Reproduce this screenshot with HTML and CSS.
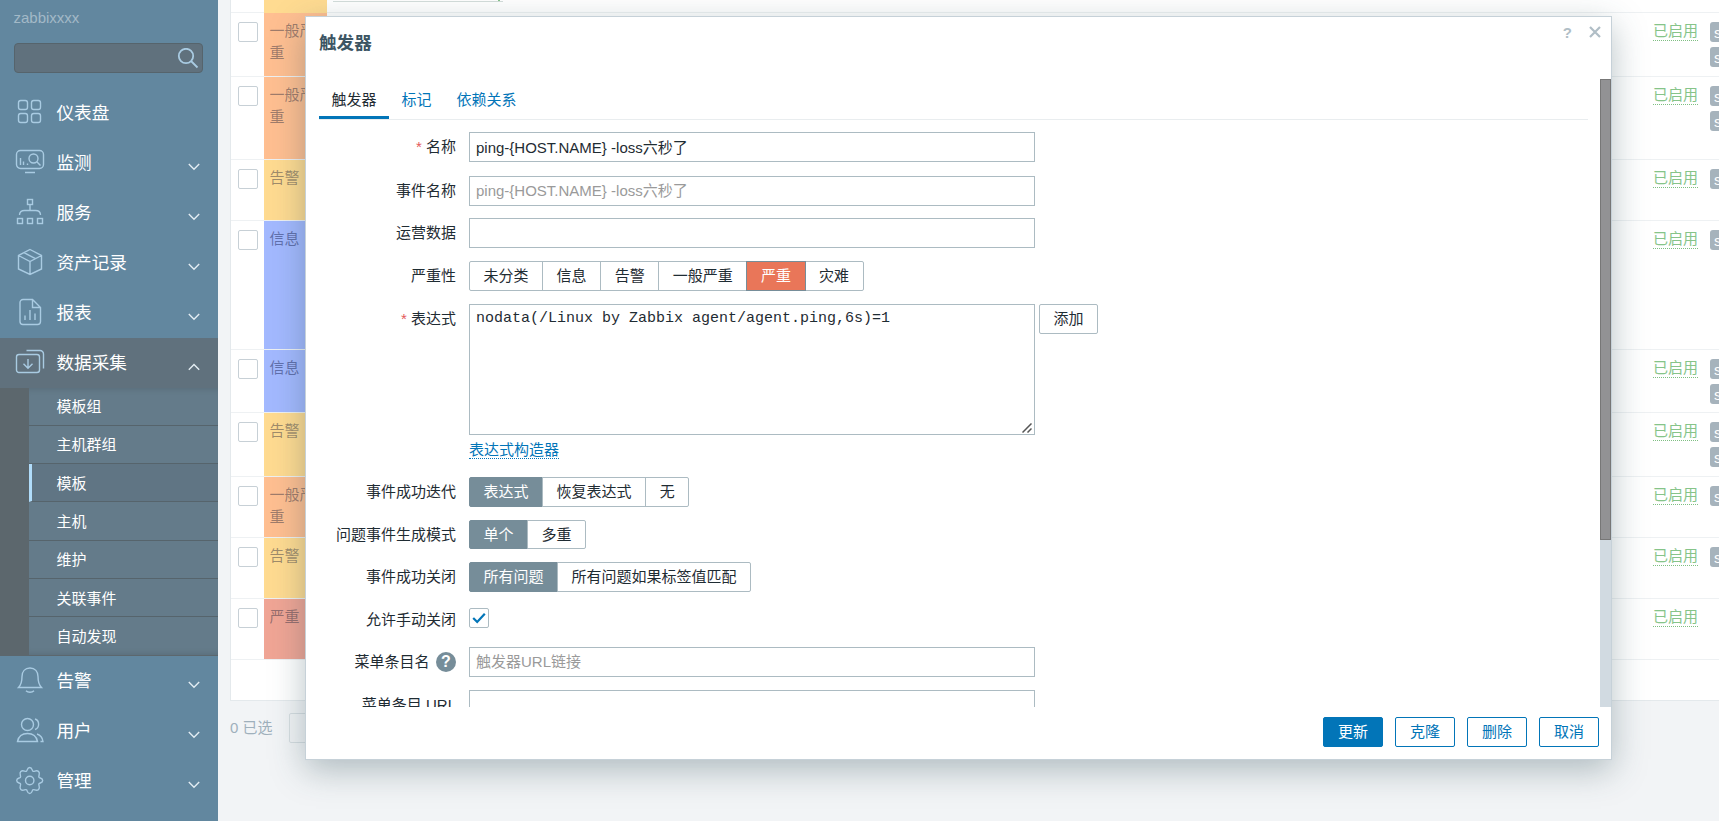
FILE: index.html
```
<!DOCTYPE html>
<html lang="zh-CN">
<head>
    <meta charset="UTF-8">
    <meta name="viewport" content="width=device-width, initial-scale=1.0">
    <title>触发器</title>
    <link rel="stylesheet" href="styles.css">
</head>
<body>
    <aside class="sidebar">
        <div class="server-name">zabbixxxx</div>
        <div class="search">
            <svg width="22" height="22" viewBox="0 0 22 22"><circle cx="9" cy="8" r="7.2"/><path d="M14 13l6.500 6.500"/></svg>
        </div>

        <nav class="menu">
            <a class="menu-item">
                <svg class="icon" viewBox="0 0 30 30"><rect x="3.5" y="3.5" width="9" height="9" rx="2.2"/><rect x="16.5" y="3.5" width="9" height="9" rx="2.2"/><rect x="3.5" y="16.5" width="9" height="9" rx="2.2"/><rect x="16.5" y="16.5" width="9" height="9" rx="2.2"/></svg>
                <span>仪表盘</span>
            </a>
            <a class="menu-item">
                <svg class="icon" viewBox="0 0 30 30"><rect x="1.5" y="3.5" width="27" height="18" rx="4"/><path d="M5.5 11v7M8.500 14.500v3.500M12.500 16.500v1.500M10 25.500h10"/><circle cx="18.500" cy="11.500" r="4.500"/><path d="M21.800 14.800l3.700 3.700"/></svg>
                <span>监测</span>
                <svg class="arrow" viewBox="0 0 12 8"><path d="M.8 1l5.200 5.200L11.200 1"/></svg>
            </a>
            <a class="menu-item">
                <svg class="icon" viewBox="0 0 30 30"><rect x="12.500" y="2.500" width="5" height="5"/><path d="M15 7.500v6M4.500 18c0-3 2-4.500 5-4.500h11c3 0 5 1.500 5 4.500"/><rect x="2.500" y="21.500" width="5" height="5"/><rect x="12.500" y="21.500" width="5" height="5"/><rect x="22.500" y="21.500" width="5" height="5"/></svg>
                <span>服务</span>
                <svg class="arrow" viewBox="0 0 12 8"><path d="M.8 1l5.200 5.200L11.200 1"/></svg>
            </a>
            <a class="menu-item">
                <svg class="icon" viewBox="0 0 30 30"><path d="M15 2.500l11.500 6v13.500L15 27.500 3.500 22V8.500zM3.500 8.500l11.500 6 11.500-6M15 14.500v13M9 5.700l11.500 6"/></svg>
                <span>资产记录</span>
                <svg class="arrow" viewBox="0 0 12 8"><path d="M.8 1l5.200 5.200L11.200 1"/></svg>
            </a>
            <a class="menu-item">
                <svg class="icon" viewBox="0 0 30 30"><path d="M17.500 2.500H8a3 3 0 0 0-3 3v19a3 3 0 0 0 3 3h14.500a3 3 0 0 0 3-3v-14zM17.500 2.500v8h8M10 18.500v4.500M15 13v10M20 16.500V23"/></svg>
                <span>报表</span>
                <svg class="arrow" viewBox="0 0 12 8"><path d="M.8 1l5.200 5.200L11.200 1"/></svg>
            </a>
            <a class="menu-item selected">
                <svg class="icon" viewBox="0 0 30 30"><rect x="1.500" y="7.500" width="23" height="18" rx="2.500"/><path d="M11.500 3.500H25a3.500 3.500 0 0 1 3.500 3.500v14.500M13 12v9M8.500 16.700l4.500 4.500 4.500-4.500"/></svg>
                <span>数据采集</span>
                <svg class="arrow" viewBox="0 0 12 8"><path d="M.8 6.800L6 1.600l5.200 5.200"/></svg>
            </a>
            <div class="submenu">
                <a>模板组</a>
                <a>主机群组</a>
                <a class="current">模板</a>
                <a>主机</a>
                <a>维护</a>
                <a>关联事件</a>
                <a>自动发现</a>
            </div>
            <a class="menu-item">
                <svg class="icon" viewBox="0 0 30 30"><path d="M3.500 22.500h23c-2.500-2.500-3.500-5-3.500-11 0-5-3-8.500-8-8.500s-8 3.500-8 8.500c0 6-1 8.500-3.500 11zM11 25.700c2 2 6 2 8 0"/></svg>
                <span>告警</span>
                <svg class="arrow" viewBox="0 0 12 8"><path d="M.8 1l5.200 5.200L11.200 1"/></svg>
            </a>
            <a class="menu-item">
                <svg class="icon" viewBox="0 0 30 30"><circle cx="12.500" cy="9.500" r="6"/><path d="M2.500 26.500c1-5 4.500-8 10-8s9 3 10 8zM20 4c4.800 1.500 4.800 9 0 10.500M22 19c3.300 1 5.500 3.500 6 7.500h-2.500"/></svg>
                <span>用户</span>
                <svg class="arrow" viewBox="0 0 12 8"><path d="M.8 1l5.200 5.200L11.200 1"/></svg>
            </a>
            <a class="menu-item">
                <svg class="icon" viewBox="0 0 30 30"><path d="M11.500 6.200C12.500 5.500 12 2.500 14.700 2.500S16.900 5.500 17.900 6.200C19.300 7 21.500 4.500 23.600 6.600S23 10.900 24 12.300C24.700 13.300 27.700 12.800 27.700 15.500S24.700 17.700 24 18.700C23 20.100 25.700 22.300 23.600 24.400S19.300 24 17.900 24.800C16.900 25.500 17.400 28.500 14.700 28.500S12.500 25.500 11.500 24.800C10.100 24 7.900 26.500 5.800 24.400S6.400 20.100 5.400 18.700C4.700 17.700 1.700 18.200 1.700 15.500S4.700 13.300 5.400 12.300C6.400 10.900 3.700 8.700 5.800 6.600S10.100 7 11.500 6.200z"/><circle cx="14.700" cy="15.500" r="4.200"/></svg>
                <span>管理</span>
                <svg class="arrow" viewBox="0 0 12 8"><path d="M.8 1l5.200 5.200L11.200 1"/></svg>
            </a>
        </nav>
    </aside>

    <main class="page">
        <div class="list">
            <div class="row h-first">
                <div class="check"></div><div class="sev warning"></div><div class="link-end"></div>
            </div>
            <div class="row h-64">
                <div class="check"><i></i></div><div class="sev average">一般严重</div><div class="expr"></div>
                <div class="status"><a>已启用</a></div><div class="tags"><b>s</b><b>s</b></div>
            </div>
            <div class="row h-83">
                <div class="check"><i></i></div><div class="sev average">一般严重</div><div class="expr expr-and"><a>m</a>)&gt;<br><span>and</span></div>
                <div class="status"><a>已启用</a></div><div class="tags"><b>s</b><b>s</b></div>
            </div>
            <div class="row h-61">
                <div class="check"><i></i></div><div class="sev warning">告警</div><div class="expr"></div>
                <div class="status"><a>已启用</a></div><div class="tags"><b>s</b></div>
            </div>
            <div class="row h-129">
                <div class="check"><i></i></div><div class="sev info">信息</div><div class="expr">&gt;0</div>
                <div class="status"><a>已启用</a></div><div class="tags"><b>s</b></div>
            </div>
            <div class="row h-63">
                <div class="check"><i></i></div><div class="sev info">信息</div><div class="expr"></div>
                <div class="status"><a>已启用</a></div><div class="tags"><b>s</b><b>s</b></div>
            </div>
            <div class="row h-64">
                <div class="check"><i></i></div><div class="sev warning">告警</div><div class="expr"></div>
                <div class="status"><a>已启用</a></div><div class="tags"><b>s</b><b>s</b></div>
            </div>
            <div class="row h-61">
                <div class="check"><i></i></div><div class="sev average">一般严重</div><div class="expr"></div>
                <div class="status"><a>已启用</a></div><div class="tags"><b>s</b></div>
            </div>
            <div class="row h-61">
                <div class="check"><i></i></div><div class="sev warning">告警</div><div class="expr"></div>
                <div class="status"><a>已启用</a></div><div class="tags"><b>s</b></div>
            </div>
            <div class="row h-61">
                <div class="check"><i></i></div><div class="sev high">严重</div><div class="expr"></div>
                <div class="status"><a>已启用</a></div><div class="tags"></div>
            </div>
        </div>
        <div class="actions"><span>0 已选</span><button></button></div>
    </main>

    <div class="dialog">
        <div class="dialog-head">
            <h4>触发器</h4>
            <span class="help">?</span>
            <svg class="close" viewBox="0 0 12 12"><path d="M1 1l10 10M11 1L1 11"/></svg>
        </div>
        <div class="dialog-body">
            <div class="content">
                <div class="tabs">
                    <a class="active">触发器</a>
                    <a>标记</a>
                    <a>依赖关系</a>
                </div>
                <div class="form-row row-44">
                    <label class="required">名称</label>
                    <input type="text" value="ping-{HOST.NAME} -loss六秒了">
                </div>
                <div class="form-row row-42">
                    <label>事件名称</label>
                    <input type="text" placeholder="ping-{HOST.NAME} -loss六秒了">
                </div>
                <div class="form-row">
                    <label>运营数据</label>
                    <input type="text">
                </div>
                <div class="form-row">
                    <label>严重性</label>
                    <div class="radio"><span>未分类</span><span>信息</span><span>告警</span><span>一般严重</span><span class="sev-on">严重</span><span>灾难</span></div>
                </div>
                <div class="form-row row-expr">
                    <label class="required">表达式</label>
                    <div>
                        <div class="textarea-wrap">
                            <textarea spellcheck="false">nodata(/Linux by Zabbix agent/agent.ping,6s)=1</textarea>
                            <svg class="grip" viewBox="0 0 10 10"><path d="M.5 9.500l9-9M5.500 9.500l4-4"/></svg>
                        </div>
                        <a class="builder">表达式构造器</a>
                    </div>
                    <button class="add">添加</button>
                </div>
                <div class="form-row">
                    <label>事件成功迭代</label>
                    <div class="radio"><span class="on">表达式</span><span>恢复表达式</span><span>无</span></div>
                </div>
                <div class="form-row row-42">
                    <label>问题事件生成模式</label>
                    <div class="radio short"><span class="on">单个</span><span>多重</span></div>
                </div>
                <div class="form-row">
                    <label>事件成功关闭</label>
                    <div class="radio"><span class="on">所有问题</span><span>所有问题如果标签值匹配</span></div>
                </div>
                <div class="form-row row-42">
                    <label>允许手动关闭</label>
                    <div class="checkbox"><svg viewBox="0 0 14 12"><path d="M1.200 6l4 4L12.800 1.800"/></svg></div>
                </div>
                <div class="form-row">
                    <label>菜单条目名<span class="hint">?</span></label>
                    <input type="text" placeholder="触发器URL链接">
                </div>
                <div class="form-row">
                    <label>菜单条目 URL</label>
                    <input type="text">
                </div>
            </div>
            <div class="scrollbar"><div class="thumb"></div></div>
        </div>
        <div class="dialog-foot">
            <button class="primary">更新</button>
            <button>克隆</button>
            <button>删除</button>
            <button>取消</button>
        </div>
    </div>
</body>
</html>
```
FILE: styles.css
```
* {
    box-sizing: border-box;
}

body {
    margin: 0;
    height: 821px;
    display: flex;
    overflow: hidden;
    position: relative;
    background: #f2f4f6;
    color: #1f2c33;
    font: 15px/21px "Liberation Sans", "Noto Sans CJK SC", sans-serif;
}

svg {
    fill: none;
    stroke: #a9cbe2;
    stroke-width: 1.4;
}

/* sidebar */
.sidebar {
    width: 218px;
    height: 821px;
    flex: none;
    background: #62879f;
    color: #fff;
}

.server-name {
    height: 43px;
    padding: 8px 13.500px;
    line-height: 20px;
    color: #a3b9c7;
}

.search {
    width: 189px;
    height: 30px;
    margin-left: 14px;
    padding: 4px 3px 0 0;
    display: flex;
    justify-content: flex-end;
    background: #60717d;
    border: 1px solid #56646c;
    border-radius: 4px;
}

.search svg {
    stroke-width: 1.8;
}

.menu {
    margin-top: 14.500px;
}

.menu-item {
    display: flex;
    align-items: center;
    height: 50px;
    padding: 0 18px 0 15px;
    font-size: 17.600px;
}

.menu-item span {
    margin-top: 1px;
}

.menu-item.selected {
    background: #60717d;
}

.icon {
    width: 30px;
    height: 30px;
    margin: -2px 11.500px 0 0;
}

.arrow {
    width: 12px;
    height: 8px;
    margin: 8px 0 0 auto;
    stroke: #e3edf3;
    stroke-width: 1.4;
}

.submenu {
    display: grid;
    grid-template-rows: repeat(7, 1fr);
    height: 268px;
    padding-left: 29px;
    background: #5c676d;
}

.submenu a {
    display: flex;
    align-items: center;
    padding: 1px 0 0 27.500px;
    background: #647b8a;
    border-bottom: 1px solid #56646c;
}

.submenu a:first-child {
    box-shadow: inset 0 6px 6px -5px rgba(0, 0, 0, .12);
}

.submenu a:last-child {
    border-bottom: 0;
    box-shadow: inset 0 -6px 6px -5px rgba(0, 0, 0, .12);
}

.submenu .current {
    padding-left: 24.500px;
    background: #607584;
    border-left: 3px solid #b0dcfa;
}

/* trigger list */
.page {
    flex: 1;
    padding-left: 12px;
}

.list {
    background: #fff;
    border-left: 1px solid #e4e9ec;
    border-bottom: 1px solid #e4e9ec;
    height: 701px;
}

.row {
    display: grid;
    grid-template-columns: 33px 63px 1fr 112px 66px;
    border-bottom: 1px solid #eef1f3;
}

.h-first { height: 13px; }
.h-61 { height: 61px; }
.h-63 { height: 63px; }
.h-64 { height: 64px; }
.h-83 { height: 83px; }
.h-129 { height: 129px; }

.check {
    padding: 9px 0 0 7px;
}

.check i {
    display: block;
    width: 20px;
    height: 20px;
    border: 1px solid #c7d0d6;
    border-radius: 2px;
}

.sev {
    padding: 6.500px 5.500px;
    line-height: 22.500px;
    color: rgba(40, 40, 60, .45);
}

.average { background: #ffbf91; }
.warning { background: #ffdb91; }
.info { background: #a3b9ff; color: rgba(30, 40, 90, .5); }
.high { background: #f0a595; }

.link-end {
    width: 170px;
    height: 2px;
    margin-left: 6px;
    border-bottom: 1px solid #d3dedb;
    background: linear-gradient(#86c489, #86c489) 165px 0 / 2px 1px no-repeat;
}

.expr {
    grid-column: 4;
    grid-row: 1;
    padding: 6px 0 0 5px;
    line-height: 23px;
    color: #6b7378;
    white-space: nowrap;
}

.expr-and {
    padding-left: 2px;
}

.expr a {
    color: #86c489;
    border-bottom: 1px solid #c5ced3;
}

.expr span {
    margin-left: 6px;
}

.status {
    grid-column: 5;
    grid-row: 1;
    padding: 7px 0 0;
}

.status a {
    display: inline-block;
    height: 21px;
    border-bottom: 1px dotted #7fbf82;
    color: #86c489;
}

.tags {
    grid-column: 5;
    grid-row: 1;
    padding: 9px 0 0 57px;
    overflow: hidden;
}

.tags b {
    display: block;
    width: 40px;
    height: 20px;
    margin-bottom: 5px;
    padding-left: 4px;
    border-radius: 3px;
    background: #a6b3bc;
    color: #fff;
    font-weight: normal;
}

.actions {
    display: flex;
    align-items: center;
    gap: 16px;
    margin-top: 12px;
    color: #9fb0bc;
}

.actions span {
    margin-top: -2px;
}

.actions button {
    width: 90px;
    height: 30px;
    background: transparent;
    border: 1px solid #d6dde1;
    border-radius: 2px;
}

/* trigger dialog */
.dialog {
    position: absolute;
    left: 305px;
    top: 16px;
    width: 1307px;
    height: 744px;
    background: #fff;
    border: 1px solid #c6d1d8;
    box-shadow: 0 10px 32px rgba(50, 80, 90, .35);
}

.dialog-head {
    display: flex;
    height: 62px;
    padding-left: 13px;
}

.dialog-head h4 {
    flex: 1;
    margin: 16px 0 0;
    font-size: 17.600px;
    color: #3c5563;
}

.help {
    margin-top: 5px;
    font-weight: bold;
    color: #b0bec6;
}

.close {
    width: 12px;
    height: 12px;
    margin: 9px 10px 0 17px;
    stroke: #b0bec6;
    stroke-width: 2.200;
}

.dialog-body {
    display: flex;
    justify-content: space-between;
    height: 628px;
    overflow: hidden;
}

.content {
    width: 1269px;
    margin-left: 13px;
}

.tabs {
    display: flex;
    height: 41px;
    margin-bottom: 12px;
    border-bottom: 1px solid #e9edef;
    color: #0275b8;
}

.tabs a {
    height: 40px;
    padding: 10px 12.500px 0;
}

.tabs .active {
    border-bottom: 3px solid #0275b8;
    color: #1f2c33;
}

.form-row {
    display: flex;
    height: 43px;
}

.row-44 { height: 44px; }
.row-42 { height: 42px; }
.row-expr { height: 173px; }

.form-row label {
    width: 137px;
    margin-right: 13px;
    padding-top: 4px;
    text-align: right;
    white-space: nowrap;
}

.required::before {
    content: "* ";
    color: #e45959;
}

input,
textarea {
    display: block;
    width: 566px;
    height: 30px;
    padding: 0 6px 1px;
    border: 1px solid #acbbc2;
    border-radius: 0;
    outline: 0;
    background: #fff;
    color: #1f2c33;
    font: inherit;
}

input::placeholder {
    color: #9a9a9a;
}

.textarea-wrap {
    position: relative;
}

textarea {
    height: 131px;
    padding-top: 5px;
    resize: none;
    font: 15px/18px "Liberation Mono", monospace;
}

/* resize handle in the corner of the textarea */
.grip {
    position: absolute;
    right: 3px;
    bottom: 2px;
    width: 10px;
    height: 10px;
    stroke: #555;
    stroke-width: 1.5;
}

.builder {
    display: inline-block;
    height: 20px;
    margin-top: 4px;
    border-bottom: 1px dotted #0275b8;
    color: #0275b8;
}

.radio {
    display: flex;
    height: 30px;
}

.radio.short {
    height: 29px;
}

.radio span {
    padding: 3px 13.600px 0 13.500px;
    border: 1px solid #acbbc2;
    margin-right: -1px;
}

.radio span:first-child {
    border-radius: 2px 0 0 2px;
}

.radio span:last-child {
    border-radius: 0 2px 2px 0;
}

.radio .on {
    background: #768d99;
    border-color: #768d99;
    color: #fff;
}

.radio .sev-on {
    background: #e97659;
    border-color: #768d99;
    color: #fff;
    z-index: 1;
}

.checkbox {
    width: 20px;
    height: 20px;
    margin-top: 3px;
    padding: 3px 0 0 2px;
    border: 1px solid #acbbc2;
    border-radius: 2px;
}

.checkbox svg {
    display: block;
    width: 14px;
    height: 12px;
    stroke: #0275b8;
    stroke-width: 2.200;
}

.hint {
    display: inline-block;
    width: 20px;
    height: 20px;
    margin-left: 6.500px;
    border-radius: 50%;
    background: #768d99;
    color: #fff;
    font-size: 16px;
    font-weight: bold;
    line-height: 20px;
    text-align: center;
}

button {
    width: 60px;
    height: 30px;
    padding: 0 0 2px;
    background: #fff;
    border: 1px solid #0275b8;
    border-radius: 2px;
    color: #0275b8;
    font: inherit;
}

.add {
    width: 59px;
    margin-left: 4px;
    border-color: #acbbc2;
    color: #1f2c33;
}

.scrollbar {
    width: 11px;
    background: #d1dae1;
}

.thumb {
    height: 461px;
    background: #929294;
    border: 1px solid #777;
}

.dialog-foot {
    display: flex;
    justify-content: flex-end;
    gap: 12px;
    padding: 10px 12px 0 0;
}

.dialog-foot .primary {
    background: #0275b8;
    color: #fff;
}
```
